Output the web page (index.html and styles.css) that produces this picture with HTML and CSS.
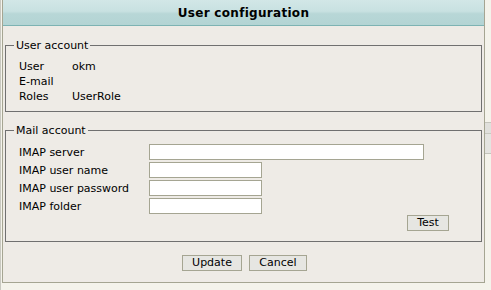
FILE: index.html
```html
<!DOCTYPE html>
<html lang="en">
<head>
    <meta charset="UTF-8">
    <title>User configuration</title>
    <link rel="stylesheet" href="styles.css">
</head>
<body>
    <!-- page behind the dialog -->
    <div class="behind-tab"></div>

    <div class="dialog">
        <div class="dialog-title">User configuration</div>
        <div class="dialog-body">
            <!-- user account info -->
            <fieldset class="group">
                <legend>User account</legend>
                <table class="info-table">
                    <tr><td class="info-label">User</td><td>okm</td></tr>
                    <tr><td class="info-label">E-mail</td><td></td></tr>
                    <tr><td class="info-label">Roles</td><td>UserRole</td></tr>
                </table>
            </fieldset>

            <!-- mail account settings -->
            <fieldset class="group mail-group">
                <legend>Mail account</legend>
                <div class="form-row">
                    <label class="form-label">IMAP server</label>
                    <input class="text-input wide" type="text">
                </div>
                <div class="form-row">
                    <label class="form-label">IMAP user name</label>
                    <input class="text-input" type="text">
                </div>
                <div class="form-row">
                    <label class="form-label">IMAP user password</label>
                    <input class="text-input" type="password">
                </div>
                <div class="form-row">
                    <label class="form-label">IMAP folder</label>
                    <input class="text-input" type="text">
                </div>
                <div class="test-row">
                    <button class="btn test-btn">Test</button>
                </div>
            </fieldset>

            <div class="button-row">
                <button class="btn update-btn">Update</button>
                <button class="btn cancel-btn">Cancel</button>
            </div>
        </div>
    </div>
</body>
</html>
```

FILE: styles.css
```css
body {
    margin: 0;
    background-color: #f4f3eb;
    font-family: "DejaVu Sans", Verdana, sans-serif;
    font-size: 11px;
    color: #000;
    position: relative;
    height: 290px;
    overflow: hidden;
    border-left: 1px solid #c8c8c0;
    box-sizing: border-box;
}

/* piece of the page that peeks out on the right */
.behind-tab {
    position: absolute;
    left: 484px;
    top: 122px;
    width: 10px;
    height: 30px;
    background-color: #e4e4e0;
    border-top: 1px solid #c4c4bc;
    border-bottom: 1px solid #c4c4bc;
    box-shadow: inset 0 10px 0 #e0e0dc, inset 0 11px 0 #c8c8c0;
}

/* dialog window */
.dialog {
    position: absolute;
    left: 1px;
    top: 0;
    width: 483px;
    height: 283px;
    box-sizing: border-box;
    border: 1px solid #a5a592;
    border-top: none;
    background-color: #eeebe6;
}

.dialog-title {
    height: 25px;
    line-height: 26px;
    text-align: center;
    font-size: 12px;
    font-weight: bold;
    letter-spacing: 0.3px;
    background: linear-gradient(#d2e7e7 0%, #c8e1e1 45%, #b8d7d7 55%, #b3d4d4 100%);
    border-bottom: 1px solid #7db3b3;
}

.dialog-body {
    padding: 0 2px 0 2px;
}

/* fieldsets */
.group {
    margin: 13px 0 0 0;
    padding: 0 0 0 13px;
    border: 1px solid #707070;
    min-width: 0;
}

.group legend {
    margin-left: -5px;
    padding: 0 2px;
    line-height: 13px;
}

.info-table {
    border-collapse: collapse;
    margin: 6px 0 7px 0;
}

.info-table td {
    padding: 0;
    height: 15px;
}

.info-table tr:first-child td {
    height: 16px;
}

.info-label {
    width: 53px;
}

.mail-group {
    margin-top: 12px;
    padding-top: 6px;
    padding-bottom: 10px;
}

.form-row {
    display: flex;
    align-items: center;
    height: 18px;
}

.form-label {
    width: 130px;
}

.text-input {
    width: 113px;
    height: 16px;
    box-sizing: border-box;
    margin: 0;
    padding: 0 2px;
    border: 1px solid #a5a592;
    background-color: #fff;
    font-family: inherit;
    font-size: 11px;
}

.text-input.wide {
    width: 275px;
}

.test-row {
    display: flex;
    justify-content: flex-end;
    padding-right: 32px;
    margin-top: 0;
}

.btn {
    height: 16px;
    box-sizing: border-box;
    margin: 0;
    padding: 0;
    border: 1px solid #a5a592;
    background-color: #e6e6e2;
    font-family: inherit;
    font-size: 11px;
    color: #000;
    line-height: 14px;
}

.test-btn {
    width: 42px;
}

.button-row {
    display: flex;
    justify-content: center;
    gap: 7px;
    margin-top: 13px;
    padding-left: 2px;
}

.update-btn {
    width: 60px;
}

.cancel-btn {
    width: 58px;
}
```
